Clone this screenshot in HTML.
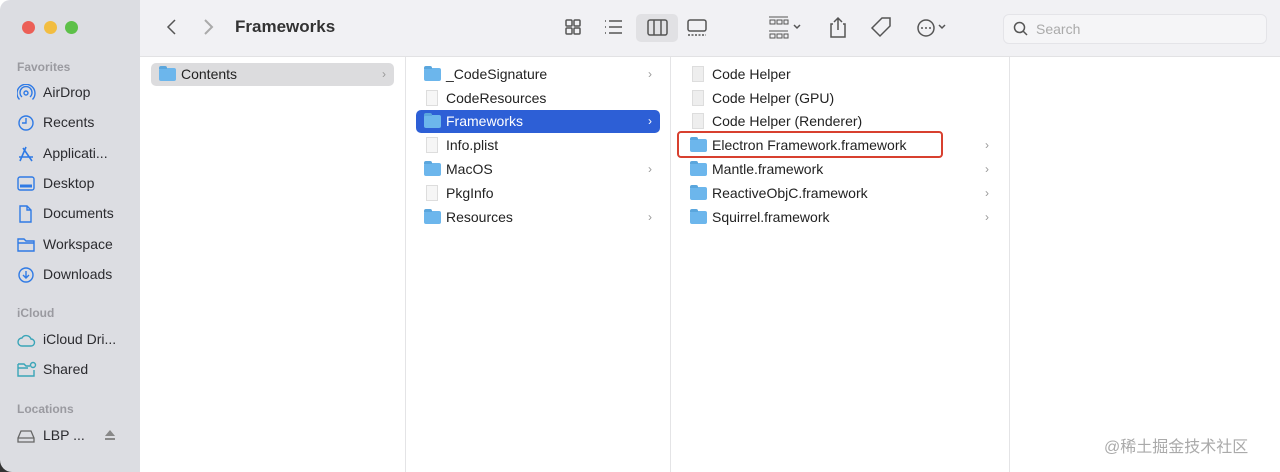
<!DOCTYPE html><html><head><style>
body{margin:0;width:1280px;height:472px;overflow:hidden;background:#fff;font-family:"Liberation Sans",Arial,sans-serif;position:relative}
.abs{position:absolute}
.side{left:0;top:0;width:140px;height:472px;background:#dcdde2;border-radius:10px 0 0 10px}
.tool{left:140px;top:0;width:1140px;height:56px;background:#f1f1f4;border-bottom:1px solid #e2e2e4}
.dot{width:13px;height:13px;border-radius:50%;top:21px}
.hdr{font-size:12px;color:#9a9aa0;font-weight:bold;left:17px}
.si{left:17px;font-size:14px;color:#2b2b2f;height:20px;line-height:20px}
.si svg{position:absolute;left:0;top:2px}
.si span{position:absolute;left:26px;white-space:nowrap}
.row{position:absolute;height:23px;line-height:23px;font-size:14px;color:#222;white-space:nowrap}
.row .t{position:absolute;left:30px}
.row .ch{position:absolute;right:8px;color:#999;font-size:12px}
.fd{position:absolute;left:8px;top:5px;width:17px;height:13px;background:#6cb6ec;border-radius:2px}
.fd:before{content:"";position:absolute;left:0;top:-2px;width:8px;height:3px;background:#5aa6dd;border-radius:2px 2px 0 0}
.fl{position:absolute;left:10px;top:3px;width:12px;height:16px;background:#f6f6f6;border:1px solid #ddd;box-sizing:border-box}
.vl{top:57px;width:1px;height:415px;background:#e4e4e6}
.ic{stroke:#555;fill:none;stroke-width:1.5}
</style></head><body>
<div class="abs side"></div>
<div class="abs tool"></div>
<div class="abs dot" style="left:22px;background:#ec5f57"></div>
<div class="abs dot" style="left:44px;background:#f2bd41"></div>
<div class="abs dot" style="left:65px;background:#5dc049"></div>
<svg class="abs" style="left:160px;top:17px" width="60" height="20"><path d="M15 3 L8 10 L15 17" class="ic" stroke-width="2"/><path d="M45 3 L52 10 L45 17" stroke="#aaa" fill="none" stroke-width="2"/></svg>
<div class="abs" style="left:235px;top:17px;font-size:17px;font-weight:bold;color:#333">Frameworks</div>
<svg class="abs" style="left:560px;top:12px" width="400" height="32">
<g class="ic"><rect x="6" y="8" width="6" height="6" rx="1"/><rect x="14" y="8" width="6" height="6" rx="1"/><rect x="6" y="16" width="6" height="6" rx="1"/><rect x="14" y="16" width="6" height="6" rx="1"/>
<path d="M49 9h13M49 15h13M49 21h13M45 9h1M45 15h1M45 21h1"/></g>
<rect x="76" y="2" width="42" height="28" rx="5" fill="#e1e1e4"/>
<g class="ic"><rect x="88" y="8" width="19" height="15" rx="2"/><path d="M94 8v15M101 8v15"/>
<rect x="128" y="8" width="18" height="11" rx="2"/><path d="M128 23h18" stroke-dasharray="2 1.5"/>
<path d="M209 5h19M209 19h19" stroke-width="1"/>
<path d="M210 8h5v4h-5zM217 8h5v4h-5zM224 8h4v4h-4zM210 22h5v4h-5zM217 22h5v4h-5zM224 22h4v4h-4z" stroke-width="1"/>
<path d="M234 13l3 3 3-3M379 13l3 3 3-3"/>
<path d="M278 6v12M274 10l4-4 4 4M273 12h-2v13h14v-13h-2"/>
<path d="M322 6h8v8l-10 10-8-8z"/><circle cx="366" cy="16" r="8"/></g>
<circle cx="362" cy="16" r="1" fill="#555"/><circle cx="366" cy="16" r="1" fill="#555"/><circle cx="370" cy="16" r="1" fill="#555"/>
</svg>
<div class="abs" style="left:1003px;top:14px;width:262px;height:28px;border:1px solid #e4e4e8;border-radius:6px;background:#f5f5f7"></div>
<svg class="abs" style="left:1013px;top:21px" width="16" height="16"><circle cx="6.5" cy="6.5" r="5" class="ic"/><path d="M10 10l4 4" class="ic"/></svg>
<div class="abs" style="left:1036px;top:21px;font-size:14px;color:#aaa">Search</div>

<div class="abs hdr" style="top:60px">Favorites</div>
<div class="abs si" style="top:82px"><svg width="20" height="18"><g stroke="#2f7ae5" fill="none" stroke-width="1.4"><circle cx="9" cy="9" r="2"/><path d="M5 13a6 6 0 1 1 8 0M2.5 15.5a9 9 0 1 1 13 0"/></g></svg><span>AirDrop</span></div>
<div class="abs si" style="top:112px"><svg width="20" height="18"><g stroke="#2f7ae5" fill="none" stroke-width="1.4"><circle cx="9" cy="9" r="7"/><path d="M9 4v5H5"/></g></svg><span>Recents</span></div>
<div class="abs si" style="top:143px"><svg width="20" height="18"><g stroke="#2f7ae5" fill="none" stroke-width="1.6"><path d="M9 2L3 16M6 3l9 13M2 12h14"/></g></svg><span>Applicati...</span></div>
<div class="abs si" style="top:173px"><svg width="20" height="18"><g stroke="#2f7ae5" fill="none" stroke-width="1.4"><rect x="1" y="2" width="16" height="13" rx="2"/><path d="M3 11h12" stroke-width="3"/></g></svg><span>Desktop</span></div>
<div class="abs si" style="top:203px"><svg width="20" height="18"><g stroke="#2f7ae5" fill="none" stroke-width="1.4"><path d="M3 1h7l4 4v12H3z M10 1v4h4"/></g></svg><span>Documents</span></div>
<div class="abs si" style="top:234px"><svg width="20" height="18"><g stroke="#2f7ae5" fill="none" stroke-width="1.4"><path d="M1 3h6l2 2h8v10H1z M1 7h16"/></g></svg><span>Workspace</span></div>
<div class="abs si" style="top:264px"><svg width="20" height="18"><g stroke="#2f7ae5" fill="none" stroke-width="1.4"><circle cx="9" cy="9" r="7"/><path d="M9 5v7M6 9l3 3 3-3"/></g></svg><span>Downloads</span></div>
<div class="abs hdr" style="top:306px">iCloud</div>
<div class="abs si" style="top:329px"><svg width="20" height="18"><path d="M5 15a4 4 0 0 1 0-8 5 5 0 0 1 9 1 3.5 3.5 0 0 1 0 7z" stroke="#3aa5b8" fill="none" stroke-width="1.4"/></svg><span>iCloud Dri...</span></div>
<div class="abs si" style="top:359px"><svg width="20" height="18"><g stroke="#3aa5b8" fill="none" stroke-width="1.4"><path d="M1 3h6l2 2h4M1 3v12h16V9M1 7h10"/><circle cx="16" cy="4" r="2.5"/></g></svg><span>Shared</span></div>
<div class="abs hdr" style="top:402px">Locations</div>
<div class="abs si" style="top:425px"><svg width="20" height="18"><g stroke="#666" fill="none" stroke-width="1.3"><path d="M4 4h10l3 7v4H1v-4z M1 11h16"/></g></svg><span>LBP ...</span><svg width="14" height="12" style="left:86px;top:4px"><path d="M7 1l5 6H2z M2 9h10v2H2z" fill="#888"/></svg></div>
<div class="abs" style="left:0;top:460px;width:12px;height:12px;background:#333;border-radius:0"></div>
<div class="abs" style="left:0;top:448px;width:140px;height:24px;background:#dcdde2;border-radius:0 0 0 12px"></div>

<div class="abs vl" style="left:405px"></div>
<div class="abs vl" style="left:670px"></div>
<div class="abs vl" style="left:1009px"></div>

<div class="row" style="left:151px;top:63px;width:243px;background:#dcdcde;border-radius:5px"><div class="fd"></div><span class="t">Contents</span><span class="ch">›</span></div>

<div class="row" style="left:416px;top:63px;width:244px"><div class="fd"></div><span class="t">_CodeSignature</span><span class="ch">›</span></div>
<div class="row" style="left:416px;top:87px;width:244px"><div class="fl"></div><span class="t">CodeResources</span></div>
<div class="row" style="left:416px;top:110px;width:244px;background:#2d5fd6;border-radius:5px;color:#fff"><div class="fd"></div><span class="t">Frameworks</span><span class="ch" style="color:#fff">›</span></div>
<div class="row" style="left:416px;top:134px;width:244px"><div class="fl"></div><span class="t">Info.plist</span></div>
<div class="row" style="left:416px;top:158px;width:244px"><div class="fd"></div><span class="t">MacOS</span><span class="ch">›</span></div>
<div class="row" style="left:416px;top:182px;width:244px"><div class="fl"></div><span class="t">PkgInfo</span></div>
<div class="row" style="left:416px;top:206px;width:244px"><div class="fd"></div><span class="t">Resources</span><span class="ch">›</span></div>

<div class="row" style="left:682px;top:63px;width:315px"><div class="fl" style="background:#eee"></div><span class="t">Code Helper</span></div>
<div class="row" style="left:682px;top:87px;width:315px"><div class="fl" style="background:#eee"></div><span class="t">Code Helper (GPU)</span></div>
<div class="row" style="left:682px;top:110px;width:315px"><div class="fl" style="background:#eee"></div><span class="t">Code Helper (Renderer)</span></div>
<div class="row" style="left:682px;top:134px;width:315px"><div class="fd"></div><span class="t">Electron Framework.framework</span><span class="ch">›</span></div>
<div class="row" style="left:682px;top:158px;width:315px"><div class="fd"></div><span class="t">Mantle.framework</span><span class="ch">›</span></div>
<div class="row" style="left:682px;top:182px;width:315px"><div class="fd"></div><span class="t">ReactiveObjC.framework</span><span class="ch">›</span></div>
<div class="row" style="left:682px;top:206px;width:315px"><div class="fd"></div><span class="t">Squirrel.framework</span><span class="ch">›</span></div>
<div class="abs" style="left:677px;top:131px;width:262px;height:23px;border:2px solid #d8402f;border-radius:4px"></div>

<div class="abs" style="left:1104px;top:433px;font-size:16px;color:#aaa;font-family:'Liberation Sans','Noto Sans CJK SC',sans-serif">@稀土掘金技术社区</div>
</body></html>
